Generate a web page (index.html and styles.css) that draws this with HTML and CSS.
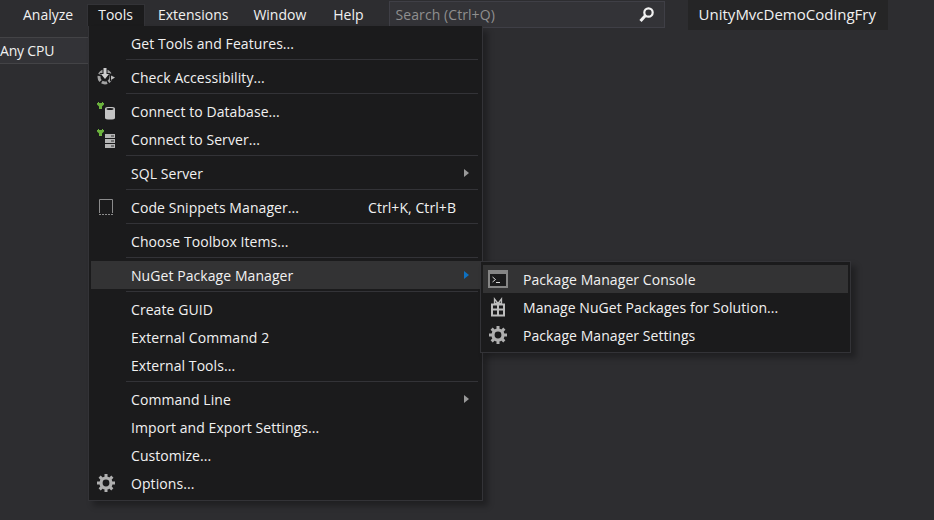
FILE: index.html
```html
<!DOCTYPE html>
<html lang="en">
<head>
    <meta charset="UTF-8">
    <title>Tools menu</title>
    <link rel="stylesheet" href="styles.css">
</head>
<body>

<div class="menubar">
    <span class="top-item">Analyze</span>
    <span class="top-item open">Tools</span>
    <span class="top-item">Extensions</span>
    <span class="top-item">Window</span>
    <span class="top-item help">Help</span>
    <div class="search">
        <span>Search (Ctrl+Q)</span>
        <svg class="search-icon" width="18" height="18" viewBox="0 0 18 18"><circle cx="10.500" cy="6.500" r="4.200" fill="none" stroke="#f1f1f1" stroke-width="2.200"/><path d="M7.500 9.500L2.500 15" stroke="#f1f1f1" stroke-width="3"/></svg>
    </div>
    <div class="solution-name">UnityMvcDemoCodingFry</div>
</div>

<div class="toolbar">
    <div class="platform">Any CPU</div>
</div>

<div class="menu tools-menu">
    <div class="item"><span class="icon"></span><span class="label">Get Tools and Features...</span></div>
    <div class="sep"></div>
    <div class="item">
        <span class="icon"><svg width="20" height="20" viewBox="0 0 20 20"><circle cx="9" cy="10" r="6" fill="none" stroke="#a3a3a3" stroke-width="3" stroke-dasharray="5.500 1.500"/><path d="M6.500 0h5v6h3l-5.500 7-5.500-7h3z" fill="#1b1b1c"/><path d="M7.500 1h3v6h2.500l-4 5-4-5h2.500z" fill="#cfcfcf"/><path d="M14 6.500l6 4-6 4z" fill="#1b1b1c"/><path d="M15 8.500l4 2-4 2.500z" fill="#bdbdbd"/></svg></span>
        <span class="label">Check Accessibility...</span>
    </div>
    <div class="sep"></div>
    <div class="item">
        <span class="icon"><svg width="22" height="22" viewBox="0 0 22 22"><path d="M3 2h1v1h3V2h1v1h1v1.500L7 6.500V9H4V6.500L2 4.500V3h1z" fill="#6cb33e"/><path d="M10 8.500C10 7.400 12 7 15 7s5 .4 5 1.500V18c0 1.100-2 1.500-5 1.500s-5-.4-5-1.500z" fill="#c4c4c4"/><ellipse cx="15" cy="9" rx="3.500" ry="1" fill="#1b1b1c"/></svg></span>
        <span class="label">Connect to Database...</span>
    </div>
    <div class="item">
        <span class="icon"><svg width="22" height="22" viewBox="0 0 22 22"><path d="M3 1h1v1h3V1h1v1h1v1.500L7 5.500V8H4V5.500L2 3.500V2h1z" fill="#6cb33e"/><path d="M10 6h10v4H10zM10 11h10v4H10zM10 16h10v4H10z" fill="#b5b5b5"/><path d="M16 7.500h3v1h-3zM16 12.500h3v1h-3zM16 17.500h3v1h-3z" fill="#333"/></svg></span>
        <span class="label">Connect to Server...</span>
    </div>
    <div class="sep"></div>
    <div class="item"><span class="icon"></span><span class="label">SQL Server</span><span class="arrow"></span></div>
    <div class="sep"></div>
    <div class="item">
        <span class="icon"><svg width="16" height="18" viewBox="0 0 16 18"><path d="M1.500 15V1.500h13V15" fill="none" stroke="#8c8c8c"/><path d="M1 16.500h14" stroke="#8c8c8c" stroke-dasharray="2 1"/></svg></span>
        <span class="label">Code Snippets Manager...</span>
        <span class="shortcut">Ctrl+K, Ctrl+B</span>
    </div>
    <div class="sep"></div>
    <div class="item"><span class="icon"></span><span class="label">Choose Toolbox Items...</span></div>
    <div class="sep"></div>
    <div class="item hot"><span class="icon"></span><span class="label">NuGet Package Manager</span><span class="arrow blue"></span></div>
    <div class="sep"></div>
    <div class="item"><span class="icon"></span><span class="label">Create GUID</span></div>
    <div class="item"><span class="icon"></span><span class="label">External Command 2</span></div>
    <div class="item"><span class="icon"></span><span class="label">External Tools...</span></div>
    <div class="sep"></div>
    <div class="item"><span class="icon"></span><span class="label">Command Line</span><span class="arrow"></span></div>
    <div class="item"><span class="icon"></span><span class="label">Import and Export Settings...</span></div>
    <div class="item"><span class="icon"></span><span class="label">Customize...</span></div>
    <div class="item">
        <span class="icon"><svg width="18" height="18" viewBox="0 0 18 18"><circle cx="9" cy="9" r="5" fill="none" stroke="#b0b0b0" stroke-width="3.200"/><path d="M9 0v18M0 9h18M2.600 2.600l12.800 12.800M15.400 2.600L2.600 15.400" stroke="#b0b0b0" stroke-width="3" stroke-dasharray="3.200 11.600"/></svg></span>
        <span class="label">Options...</span>
    </div>
</div>

<div class="menu sub-menu">
    <div class="item hot">
        <span class="icon"><svg width="20" height="18" viewBox="0 0 20 18"><rect x="1" y="1" width="18" height="16" fill="#1b1b1c" stroke="#858585" stroke-width="2"/><path d="M1 1h18v3H1z" fill="#858585"/><path d="M4.500 7l3 2.500-3 2.500" fill="none" stroke="#d8d8d8"/><path d="M8 12.500h4" stroke="#d8d8d8"/></svg></span>
        <span class="label">Package Manager Console</span>
    </div>
    <div class="item">
        <span class="icon"><svg width="16" height="20" viewBox="0 0 16 20"><path d="M2 7.500h12v11H2zM8 7.500v11M2 12.500h12" fill="none" stroke="#bdbdbd" stroke-width="2"/><path d="M8 6.500L4.500 2v4.500zM8 6.500L11.500 2v4.500z" fill="none" stroke="#bdbdbd" stroke-width="1.300"/></svg></span>
        <span class="label">Manage NuGet Packages for Solution...</span>
    </div>
    <div class="item">
        <span class="icon"><svg width="18" height="18" viewBox="0 0 18 18"><circle cx="9" cy="9" r="5" fill="none" stroke="#b0b0b0" stroke-width="3.200"/><path d="M9 0v18M0 9h18M2.600 2.600l12.800 12.800M15.400 2.600L2.600 15.400" stroke="#b0b0b0" stroke-width="3" stroke-dasharray="3.200 11.600"/></svg></span>
        <span class="label">Package Manager Settings</span>
    </div>
</div>

</body>
</html>
```

FILE: styles.css
```css
body {
    margin: 0;
    height: 520px;
    overflow: hidden;
    background-color: #2d2d30;
    color: #f1f1f1;
    font-family: "Open Sans", "Noto Sans", sans-serif;
    font-size: 14px;
    letter-spacing: 0.07px;
    position: relative;
}

.menubar {
    display: flex;
    align-items: flex-start;
    gap: 1px;
    height: 37px;
    padding-left: 11px;
}

.top-item {
    height: 22px;
    margin-top: 4px;
    padding: 0 12px;
    letter-spacing: 0;
    line-height: 22px;
}

.top-item.open {
    margin-left: 1px;
    padding: 0 12px 0 11px;
    background-color: #1b1b1c;
    box-shadow: inset 1px 1px 0 #333337, inset -1px 0 0 #333337;
}

.top-item.help {
    margin-left: 2px;
}

.search {
    display: flex;
    align-items: center;
    justify-content: space-between;
    flex: none;
    box-sizing: border-box;
    width: 276px;
    height: 27px;
    margin: 1px 0 0 12px;
    padding: 0 8px 0 6px;
    background-color: #333337;
    border: 1px solid #3f3f46;
    color: #8f8f8f;
}

.solution-name {
    flex: none;
    box-sizing: border-box;
    width: 200px;
    height: 30px;
    margin-left: 22px;
    padding-left: 11px;
    background-color: #252526;
    font-size: 15px;
    letter-spacing: 0;
    line-height: 29px;
}

.toolbar {
    height: 26px;
}

.platform {
    box-sizing: border-box;
    width: 88px;
    height: 27px;
    background-color: #333337;
    border-top: 1px solid #434346;
    border-bottom: 1px solid #434346;
    letter-spacing: -0.2px;
    line-height: 25px;
}

.menu {
    position: absolute;
    box-sizing: border-box;
    padding: 3px 2px;
    background-color: #1b1b1c;
    border: 1px solid #333337;
    box-shadow: 5px 5px 6px rgba(0, 0, 0, 0.3);
}

.tools-menu {
    left: 88px;
    top: 26px;
    width: 395px;
    border-top: 0;
}

.sub-menu {
    left: 480px;
    top: 261px;
    width: 371px;
}

.item {
    display: flex;
    align-items: center;
    height: 28px;
}

.item.hot {
    background-color: #333334;
}

.icon {
    display: flex;
    align-items: center;
    justify-content: center;
    flex: none;
    width: 30px;
    height: 28px;
}

.label {
    margin-left: 10px;
    white-space: nowrap;
}

.shortcut {
    margin-left: auto;
    margin-right: 24px;
}

.arrow {
    margin-left: auto;
    margin-right: 11px;
    border-left: 5px solid #999;
    border-top: 4px solid transparent;
    border-bottom: 4px solid transparent;
}

.arrow.blue {
    border-left-color: #0e70c0;
}

.sep {
    height: 1px;
    margin: 2px 2px 3px 35px;
    background-color: #333337;
}
```
